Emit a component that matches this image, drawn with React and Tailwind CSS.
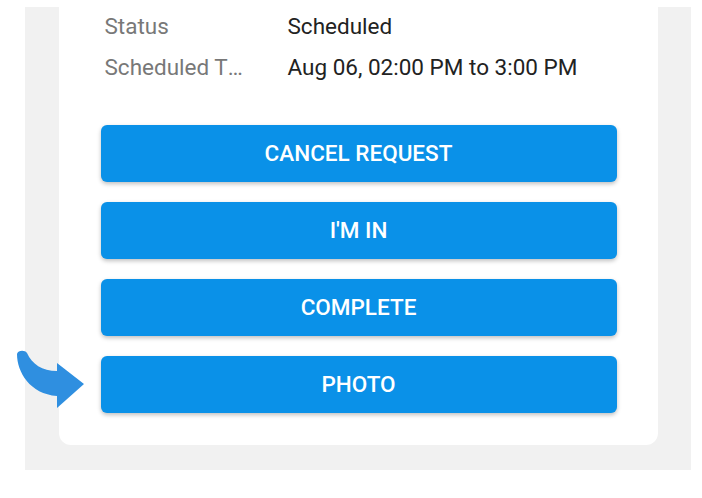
export default function App() {
  const buttons = ["CANCEL REQUEST", "I'M IN", "COMPLETE", "PHOTO"];
  return (
    <div className="relative w-[702px] h-[498px] bg-white overflow-hidden" style={{ fontFamily: "Roboto, 'Noto Sans', sans-serif" }}>
      <div className="ml-[25px] mt-[7px] w-[666px] h-[463px] bg-[#f1f1f1] flex justify-center">
        <div className="w-[599px] h-[445px] -mt-[7px] bg-white rounded-b-[12px] pl-[42px] pr-[41px]">
          <div className="pt-[10px] pl-[4px] flex flex-col gap-[9px] text-[22.5px] leading-[32px]">
            <div className="flex">
              <div className="w-[183px] text-[#787878]">Status</div>
              <div className="text-[#222]">Scheduled</div>
            </div>
            <div className="flex">
              <div className="w-[183px] flex">
                <div className="w-[140px] text-[#787878] truncate">Scheduled Time</div>
              </div>
              <div className="text-[#222]">Aug 06, 02:00 PM to 3:00 PM</div>
            </div>
          </div>
          <div className="mt-[42px] flex flex-col gap-[20px]">
            {buttons.map((b) => (
              <button
                key={b}
                className="h-[57px] w-[516px] rounded-[6px] bg-[#0a91e8] text-white text-[22.5px] font-medium shadow-[0_2px_4px_rgba(0,0,0,0.25)]"
              >
                {b}
              </button>
            ))}
          </div>
        </div>
      </div>
      <svg className="absolute left-0 top-[340px]" width="100" height="80" viewBox="0 0 100 80">
        <path
          d="M17 14 C 17 32, 30 54, 57 56 L 57 68 L 84 44 L 57 23 L 57 31 C 42 31, 32 24, 27 13 C 25 10, 18 10, 17 14 Z"
          fill="#2f8fe0"
        />
      </svg>
    </div>
  );
}
